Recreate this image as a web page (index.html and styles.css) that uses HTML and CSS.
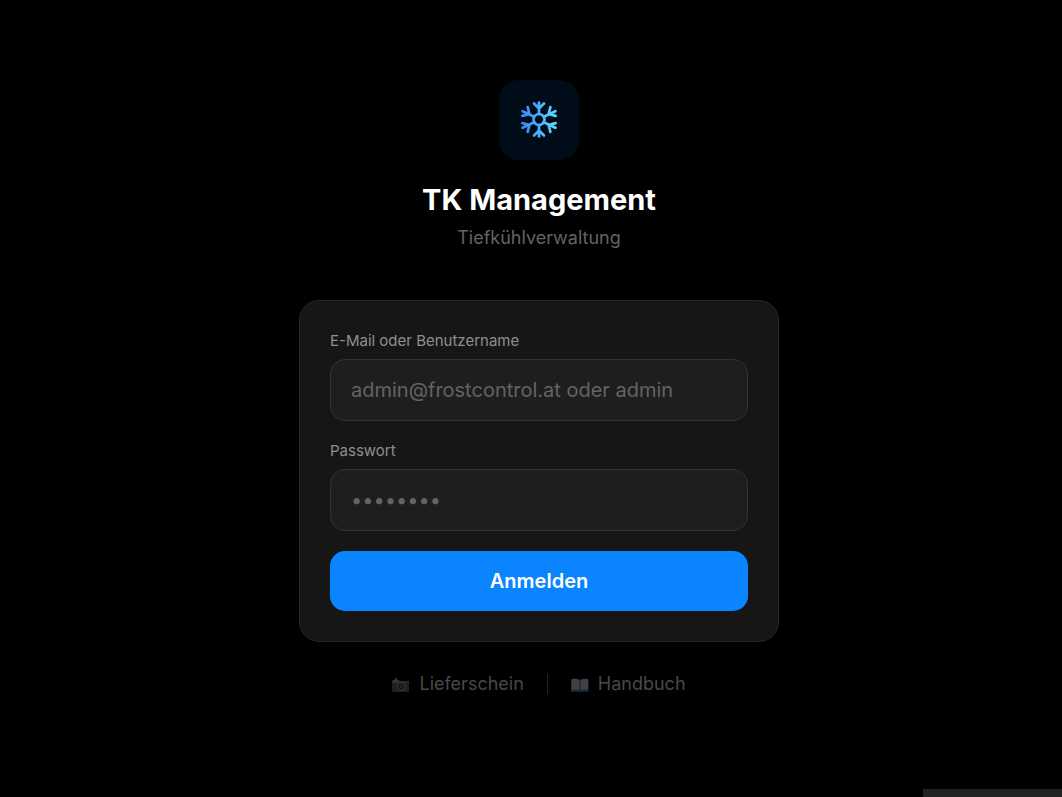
FILE: index.html
```html
<!DOCTYPE html>
<html lang="de">
<head>
<meta charset="utf-8">
<meta name="viewport" content="width=device-width, initial-scale=1">
<title>TK Management</title>
<link rel="stylesheet" href="styles.css">
</head>
<body>
<main class="page">
  <header class="brand">
    <div class="logo">
      <svg class="flake" viewBox="-19 -18.500 38 38" fill="none" stroke="url(#ice)" stroke-width="2.7" stroke-linecap="round" stroke-linejoin="round" aria-hidden="true">
        <defs>
          <linearGradient id="ice" gradientUnits="userSpaceOnUse" x1="-18" y1="0" x2="18" y2="0">
            <stop offset="0" stop-color="#3b82f6"/>
            <stop offset="1" stop-color="#5fdcff"/>
          </linearGradient>
        </defs>
        <circle r="5.500"/>
        <path d="M0-5.500V-17M-5-16 0-11 5-16M0 5.500V17M-5 16 0 11 5 16"/>
        <path d="M4.760-2.750 16.400-8.300M11.360-12.330 9.600-5.500 16.600-3.670M4.760 2.750 16.400 8.300M11.360 12.330 9.600 5.500 16.600 3.670"/>
        <path d="M-4.760-2.750-16.400-8.300M-11.360-12.330-9.600-5.500-16.600-3.670M-4.760 2.750-16.400 8.300M-11.360 12.330-9.600 5.500-16.600 3.670"/>
      </svg>
    </div>
    <h1 class="title">TK Management</h1>
    <p class="subtitle">Tiefkühlverwaltung</p>
  </header>

  <form class="card">
    <div class="field">
      <label class="label" for="user">E-Mail oder Benutzername</label>
      <input class="input" id="user" type="text" placeholder="admin@frostcontrol.at oder admin">
    </div>
    <div class="field">
      <label class="label" for="password">Passwort</label>
      <input class="input" id="password" type="password" placeholder="••••••••">
    </div>
    <button class="submit" type="submit">Anmelden</button>
  </form>

  <nav class="links">
    <a class="link" href="#lieferschein">
      <svg class="emoji" viewBox="0 0 18 18" aria-hidden="true">
        <path d="M0 6h17v11H0z" fill="#202022"/>
        <path d="M0 6h17v2H0z" fill="#2b2b2e"/>
        <circle cx="9" cy="11.500" r="4" fill="#19191b" stroke="#38383b"/>
        <circle cx="9" cy="11.500" r="1.500" fill="#242428"/>
        <path d="m4 2 1.200 2.400L8 5.500 5.200 6.600 4 8.500 2.800 6.600 0 5.500l2.800-1.100z" fill="#40371b"/>
      </svg>
      <span>Lieferschein</span>
    </a>
    <span class="divider"></span>
    <a class="link" href="#handbuch">
      <svg class="emoji" viewBox="0 0 18 18" aria-hidden="true">
        <path d="M0 5h17.500v12H0z" fill="#10263a"/>
        <path d="M.5 4q4.500-1 8.200.7V15.500Q5 14 .5 15zM9.200 4.700q4-1.700 7.900-.7v11q-4-1-7.900.5z" fill="#414145"/>
        <path d="M9 5v11" stroke="#222225"/>
      </svg>
      <span>Handbuch</span>
    </a>
  </nav>
</main>
<div class="status-strip"></div>
</body>
</html>
```

FILE: styles.css
```css
* {
  box-sizing: border-box;
}

body {
  margin: 0;
  background: #000;
  color: #fff;
  font-family: Inter, "Liberation Sans", sans-serif;
}

.page {
  display: flex;
  flex-direction: column;
  align-items: center;
  min-height: 100vh;
  padding: 80px 0 80px 16px;
}

.brand {
  display: flex;
  flex-direction: column;
  align-items: center;
  margin-bottom: 50px;
}

.logo {
  display: grid;
  place-items: center;
  width: 80px;
  height: 80px;
  margin-bottom: 20px;
  border-radius: 20px;
  background: #010c19;
}

.flake {
  width: 38px;
  height: 38px;
}

.title {
  margin: 0 0 6px;
  font-size: 29px;
  font-weight: 700;
  line-height: 40px;
}

.subtitle {
  margin: 0;
  color: #636366;
  font-size: 18px;
  line-height: 24px;
}

.card {
  width: 100%;
  max-width: 480px;
  padding: 30px;
  border: 1px solid #252525;
  border-radius: 20px;
  background: #161616;
}

.field {
  display: flex;
  flex-direction: column;
  gap: 8px;
  margin-bottom: 20px;
}

.label {
  color: #8e8e93;
  font-size: 15px;
  font-weight: 400;
  line-height: 20px;
}

.input {
  width: 100%;
  height: 62px;
  padding: 0 20px;
  border: 1px solid #333;
  border-radius: 15px;
  outline: none;
  background: #1e1e1e;
  color: #fff;
  font: inherit;
  font-size: 20px;
}

.input::placeholder {
  color: #636366;
  opacity: 1;
}

.submit {
  display: block;
  width: 100%;
  height: 60px;
  padding: 0;
  border: 0;
  border-radius: 15px;
  background: #0a84ff;
  color: #fff;
  font: inherit;
  font-size: 20px;
  font-weight: 600;
}

.links {
  display: flex;
  align-items: center;
  gap: 23px;
  margin-top: 30px;
}

.link {
  display: flex;
  align-items: center;
  gap: 9px;
  color: #48484a;
  font-size: 18px;
  line-height: 24px;
  text-decoration: none;
}

.emoji {
  width: 18px;
  height: 18px;
}

.divider {
  width: 1px;
  height: 20px;
  background: #222;
}

.status-strip {
  position: fixed;
  right: 0;
  bottom: 0;
  width: 139px;
  height: 8px;
  background: #222;
}
```
